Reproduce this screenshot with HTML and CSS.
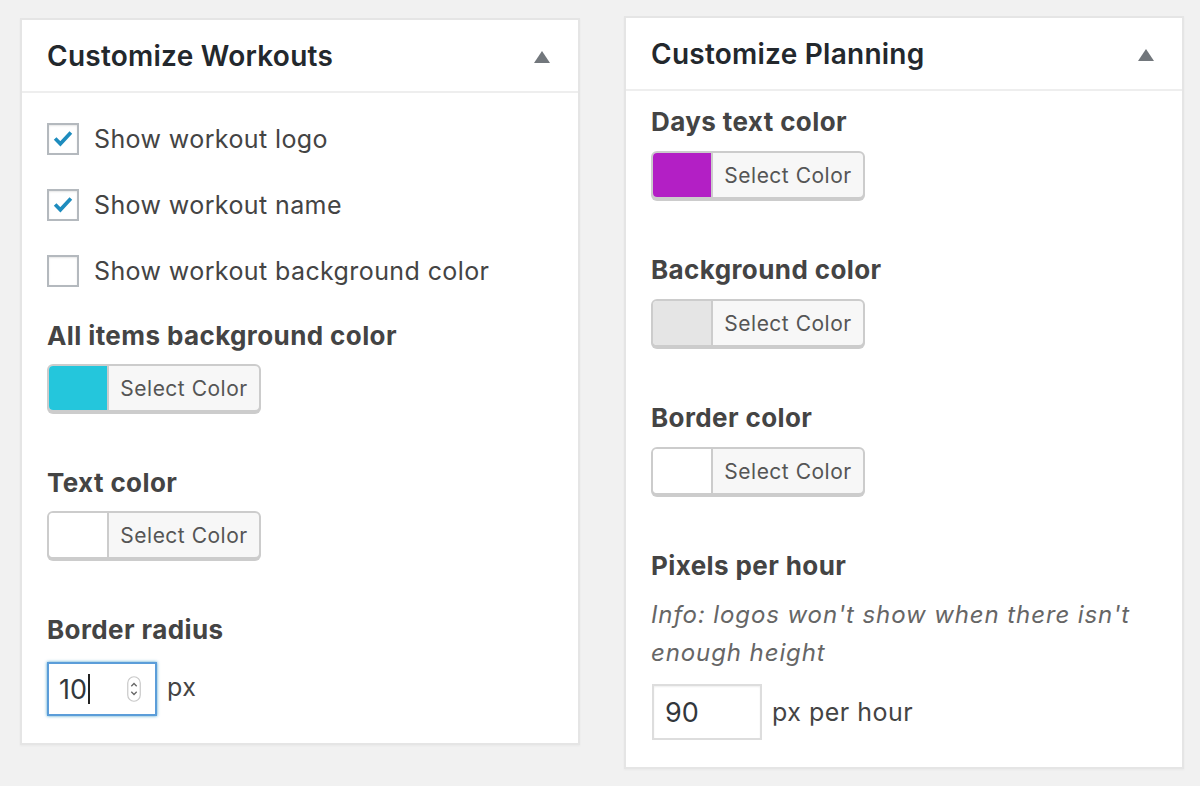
FILE: index.html
```html
<!DOCTYPE html>
<html>
<head>
<meta charset="utf-8">
<link rel="stylesheet" href="styles.css">
</head>
<body>
<div class="columns">
  <section class="postbox">
    <header class="hndle">
      <h2>Customize Workouts</h2>
      <span class="toggle"></span>
    </header>
    <div class="inside inside-left">
      <label class="check-row">
        <span class="checkbox"><svg viewBox="0 0 32 32" width="28" height="28"><path d="M7 15.5 L13 21.5 L25 8.5" fill="none" stroke="#1e8cbe" stroke-width="4.2" stroke-linejoin="miter" stroke-linecap="butt"/></svg></span>
        <span class="check-text">Show workout logo</span>
      </label>
      <label class="check-row">
        <span class="checkbox"><svg viewBox="0 0 32 32" width="28" height="28"><path d="M7 15.5 L13 21.5 L25 8.5" fill="none" stroke="#1e8cbe" stroke-width="4.2" stroke-linejoin="miter" stroke-linecap="butt"/></svg></span>
        <span class="check-text">Show workout name</span>
      </label>
      <label class="check-row">
        <span class="checkbox"></span>
        <span class="check-text">Show workout background color</span>
      </label>

      <div class="field first-after-checks">
        <div class="field-label">All items background color</div>
        <div class="color-btn"><span class="swatch swatch-cyan"></span><span class="color-text">Select Color</span></div>
      </div>
      <div class="field">
        <div class="field-label">Text color</div>
        <div class="color-btn"><span class="swatch swatch-white"></span><span class="color-text">Select Color</span></div>
      </div>
      <div class="field">
        <div class="field-label">Border radius</div>
        <div class="input-row">
          <div class="num-input focused">
            <span class="num-value">10</span><span class="caret"></span>
            <svg class="spinner" viewBox="0 0 14 26" width="14" height="26"><rect x="0.75" y="0.75" width="12.5" height="24.5" rx="6.25" fill="#fff" stroke="#c8c8c8" stroke-width="1.2"/><path d="M4.3 10.2 L7 7.5 L9.7 10.2" fill="none" stroke="#666" stroke-width="1.3"/><path d="M4.3 15.8 L7 18.5 L9.7 15.8" fill="none" stroke="#666" stroke-width="1.3"/></svg>
          </div>
          <span class="unit">px</span>
        </div>
      </div>
    </div>
  </section>

  <section class="postbox postbox-right">
    <header class="hndle">
      <h2>Customize Planning</h2>
      <span class="toggle"></span>
    </header>
    <div class="inside inside-right">
      <div class="field first-field">
        <div class="field-label">Days text color</div>
        <div class="color-btn"><span class="swatch swatch-purple"></span><span class="color-text">Select Color</span></div>
      </div>
      <div class="field">
        <div class="field-label">Background color</div>
        <div class="color-btn"><span class="swatch swatch-grey"></span><span class="color-text">Select Color</span></div>
      </div>
      <div class="field">
        <div class="field-label">Border color</div>
        <div class="color-btn"><span class="swatch swatch-white"></span><span class="color-text">Select Color</span></div>
      </div>
      <div class="field">
        <div class="field-label">Pixels per hour</div>
        <p class="info">Info: logos won't show when there isn't enough height</p>
        <div class="input-row">
          <div class="num-input plain"><span class="num-value">90</span></div>
          <span class="unit">px per hour</span>
        </div>
      </div>
    </div>
  </section>
</div>
</body>
</html>
```

FILE: styles.css
```css
* { box-sizing: border-box; }

html, body {
  margin: 0;
  padding: 0;
  background: #f1f1f1;
}

body {
  font-family: Inter, "Helvetica Neue", "Liberation Sans", Arial, sans-serif;
  color: #444;
  width: 1200px;
  height: 786px;
  overflow: hidden;
}

.columns {
  display: flex;
  align-items: flex-start;
  gap: 44px;
  padding: 18px 16px 0 20px;
}

.postbox {
  width: 560px;
  background: #fff;
  border: 2px solid #e5e5e5;
  box-shadow: 0 1px 2px rgba(0, 0, 0, 0.04);
}

.postbox-right {
  margin-top: -2px;
}

.hndle {
  height: 73px;
  border-bottom: 2px solid #eee;
  display: flex;
  align-items: center;
  justify-content: space-between;
  padding: 0 28px 0 25px;
}

.hndle h2 {
  margin: 0;
  font-size: 28px;
  font-weight: 600;
  color: #23282d;
  letter-spacing: 0.25px;
}

.toggle {
  width: 0;
  height: 0;
  border-left: 8px solid transparent;
  border-right: 8px solid transparent;
  border-bottom: 12px solid #72777c;
  margin-top: 2px;
}

.inside {
  padding: 0 25px;
}

.inside-left {
  padding-top: 13px;
  padding-bottom: 27px;
}

.inside-right {
  padding-top: 13px;
  padding-bottom: 27px;
}

.check-row {
  display: flex;
  align-items: center;
  height: 66px;
  gap: 15px;
}

.checkbox {
  width: 32px;
  height: 32px;
  border: 2px solid #b4b9be;
  background: #fff;
  box-shadow: inset 0 1px 2px rgba(0, 0, 0, 0.1);
  display: flex;
  align-items: center;
  justify-content: center;
  flex: none;
}

.checkbox svg { display: block; }

.check-text {
  font-size: 25px;
  color: #444;
  letter-spacing: 0.4px;
}

.field {
  margin-top: 53px;
}

.field.first-after-checks {
  margin-top: 14px;
}

.field.first-field {
  margin-top: 0;
}

.field-label {
  font-size: 26px;
  font-weight: 700;
  line-height: 36px;
  color: #444;
  margin-bottom: 10px;
  letter-spacing: 0.4px;
}

.inside-right .field-label {
  margin-bottom: 11px;
}

.color-btn {
  display: flex;
  width: 214px;
  height: 48px;
  border: 2px solid #ccc;
  border-radius: 6px;
  box-shadow: 0 2px 0 #ccc;
  overflow: hidden;
  background: #f7f7f7;
}

.swatch {
  width: 60px;
  flex: none;
  border-right: 2px solid #ccc;
}

.swatch-cyan { background: #24c6dc; }
.swatch-purple { background: #b31fc5; }
.swatch-grey { background: #e5e5e5; }
.swatch-white { background: #fff; }

.color-text {
  flex: 1;
  display: flex;
  align-items: center;
  justify-content: center;
  font-size: 21px;
  color: #555;
  letter-spacing: 0.5px;
  padding-right: 0;
}

.input-row {
  display: flex;
  align-items: center;
  gap: 10px;
}

.num-input {
  position: relative;
  width: 110px;
  display: flex;
  align-items: center;
  font-size: 27px;
  color: #32373c;
}

.num-input.focused {
  height: 54px;
  margin-top: 4px;
  border: 2px solid #5b9dd9;
  box-shadow: 0 0 3px rgba(30, 140, 190, 0.8);
  padding-left: 10px;
}

.num-input.plain {
  height: 56px;
  border: 2px solid #ddd;
  box-shadow: inset 0 1px 2px rgba(0, 0, 0, 0.07);
  padding-left: 11px;
  margin-left: 1px;
}

.caret {
  display: inline-block;
  width: 2px;
  height: 30px;
  background: #222;
  margin-left: 1px;
}

.spinner {
  position: absolute;
  right: 14px;
  top: 12px;
}

.unit {
  font-size: 25px;
  color: #444;
  letter-spacing: 0.5px;
}

.info {
  margin: 0;
  font-size: 24px;
  font-style: italic;
  line-height: 38px;
  color: #666;
  margin-top: 12px;
  margin-bottom: 12px;
  letter-spacing: 0.9px;
}
```
